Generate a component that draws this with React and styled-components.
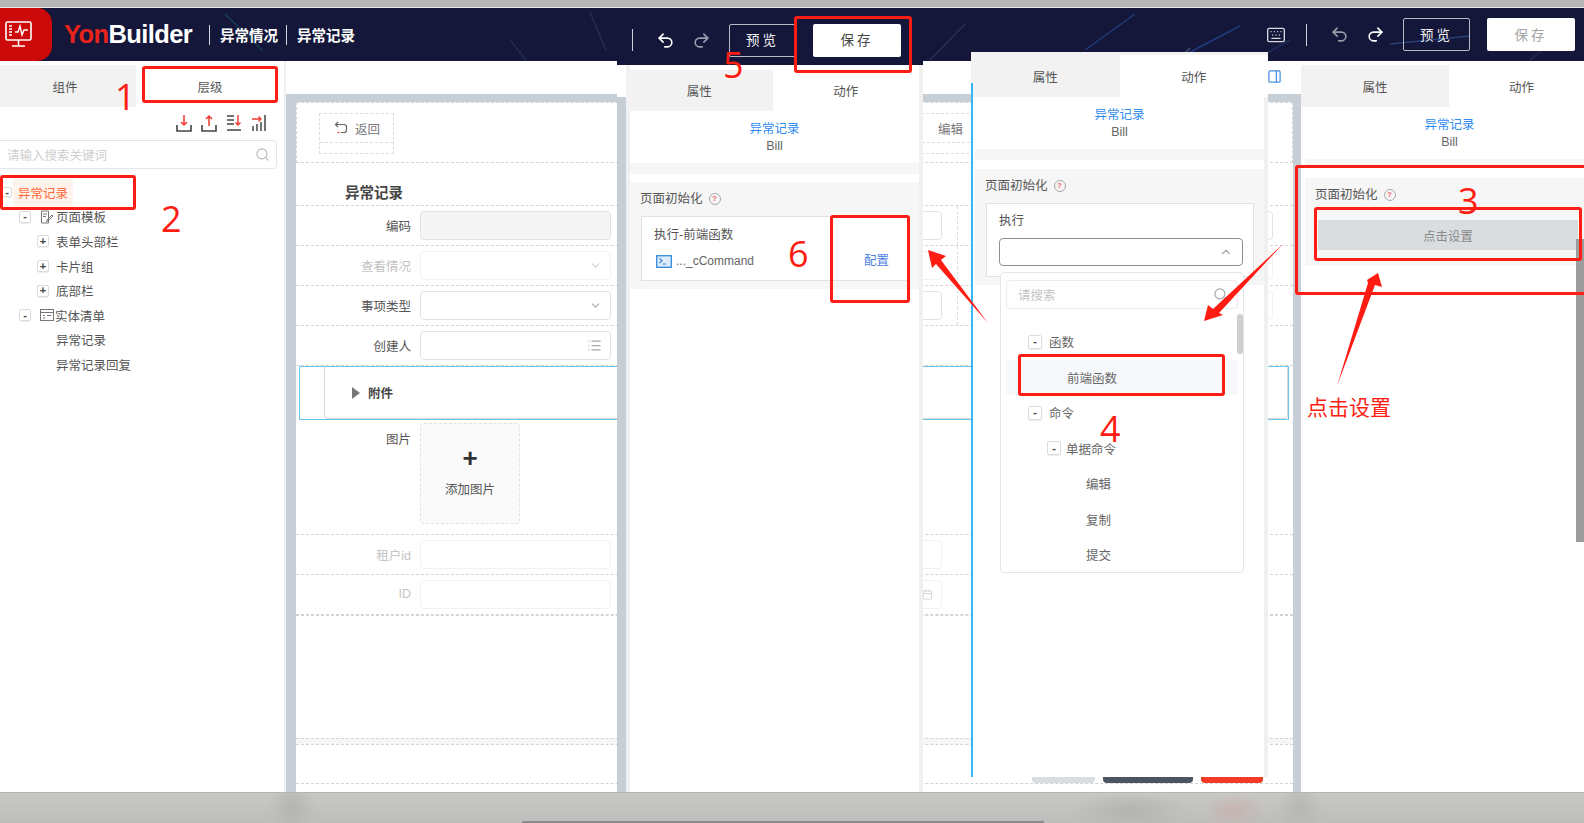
import React from "react";
import styled, { createGlobalStyle } from "styled-components";
import { Undo2, Redo2, Keyboard, ChevronDown, ChevronUp, Search, List, Calendar, PanelRight } from "lucide-react";

const GlobalStyle = createGlobalStyle`
  html, body { margin: 0; padding: 0; background: #fff; }
  * { box-sizing: border-box; }
  body { font-family: "Liberation Sans", "Noto Sans CJK SC", sans-serif; font-size: 12.5px; color: #555; }
`;

const NAVY = "#14173a";
const RED = "#ff1c12";
const STAGE = "#c8ced6";

const Page = styled.div`
  position: relative;
  width: 1584px;
  height: 823px;
  overflow: hidden;
  display: flex;
  flex-direction: column;
`;

const TopStrip = styled.div`
  height: 8px;
  background: #b4b6b4;
  border-bottom: 1px solid #e8e8e8;
`;

const Header = styled.header`
  position: relative;
  height: 53px;
  background: ${NAVY};
  display: flex;
  align-items: center;
  padding-right: 9px;
  overflow: hidden;
`;

const Streaks = styled.svg`
  position: absolute;
  inset: 0;
  width: 100%;
  height: 100%;
  filter: blur(0.7px);
`;

const LogoTile = styled.div`
  position: relative;
  width: 52px;
  height: 53px;
  background: #cc0a0a;
  border-radius: 0 15px 15px 0;
  display: flex;
  align-items: center;
  padding-left: 5px;
`;

const Brand = styled.div`
  position: relative;
  margin-left: 12px;
  width: 145px;
  font-size: 25.5px;
  font-weight: 700;
  letter-spacing: -0.6px;
  color: #fff;
  span { color: #e8231c; }
`;

const Crumb = styled.div`
  position: relative;
  height: 20px;
  display: flex;
  align-items: center;
  padding-left: 10px;
  width: ${p => p.$w}px;
  border-left: 1px solid #d8d8d8;
  color: #fff;
  font-size: 14.5px;
  font-weight: 700;
`;

const Spacer = styled.div`
  flex: 1;
`;

const Tools = styled.div`
  position: relative;
  display: flex;
  align-items: center;
  height: 34px;
`;

const ToolSep = styled.div`
  width: 1px;
  height: 22px;
  background: #cfd0d6;
  margin-right: 22px;
`;

const IconSlot = styled.div`
  width: 20px;
  margin-right: 16px;
  display: flex;
  justify-content: center;
  color: ${p => (p.$on ? "#fff" : "#9a9cab")};
`;

const PreviewBtn = styled.div`
  width: 67px;
  height: 33px;
  margin: 0 17px 0 2px;
  padding-bottom: 2px;
  border: 1px solid #b9bac4;
  border-radius: 2px;
  color: #f1f1f1;
  font-size: 13.5px;
  letter-spacing: 3px;
  display: flex;
  align-items: center;
  justify-content: center;
`;

const SaveBtn = styled.div`
  width: 88px;
  height: 33px;
  padding-bottom: 2px;
  background: #fff;
  border-radius: 2px;
  color: ${p => (p.$muted ? "#a2a2a2" : "#444")};
  font-size: 13.5px;
  letter-spacing: 3px;
  display: flex;
  align-items: center;
  justify-content: center;
`;

const KeyboardSlot = styled.div`
  position: relative;
  color: #d8d8e0;
  display: flex;
  margin-right: 20px;
`;

const Main = styled.main`
  flex: 1;
  min-height: 0;
  display: flex;
`;

const LeftPanel = styled.aside`
  width: 284px;
  background: #fff;
  padding-top: 4px;
`;

const Tabs = styled.div`
  display: flex;
  height: ${p => p.$h || 42}px;
  background: #f2f2f2;
  padding-top: ${p => p.$inset || 0}px;
`;

const Tab = styled.div`
  flex: ${p => (p.$w ? `0 0 ${p.$w}px` : 1)};
  display: flex;
  align-items: center;
  justify-content: center;
  padding: 0 ${p => p.$endPad || 0}px 0 ${p => p.$startPad || 0}px;
  background: ${p => (p.$active ? "#fff" : "#f2f2f2")};
  color: #555;
`;

const TreeTools = styled.div`
  height: 33px;
  padding: 7px 17px 0 0;
  display: flex;
  justify-content: flex-end;
  gap: 9px;
`;

const SearchBox = styled.div`
  height: 29px;
  width: 277px;
  border: 1px solid #e6e6e6;
  border-left: 0;
  border-radius: 0 4px 4px 0;
  padding: 0 6px 0 7px;
  display: flex;
  align-items: center;
  justify-content: space-between;
  color: #cfcfcf;
`;

const Tree = styled.div`
  padding-top: 11px;
`;

const TreeRow = styled.div`
  height: 24.6px;
  display: flex;
  align-items: center;
  padding-left: ${p => p.$indent}px;
  color: #555;
`;

const Toggle = styled.span`
  width: ${p => p.$size || 12}px;
  height: ${p => p.$size || 12}px;
  margin-right: ${p => p.$gap || 0}px;
  flex: none;
  border: 1px solid #dcdcdc;
  border-radius: 2px;
  box-shadow: 0 1px 1px rgba(0, 0, 0, 0.08);
  display: inline-flex;
  align-items: center;
  justify-content: center;
  color: #444;
  font-size: 11px;
  font-weight: 700;
  line-height: 1;
`;

const RootLabel = styled.span`
  margin-left: 1px;
  padding: 4px 5px;
  background: #fff3ec;
  border-radius: 2px;
  color: #ff6a3c;
`;

const Canvas = styled.section`
  flex: 1;
  min-width: 0;
  display: flex;
  flex-direction: column;
  padding-left: 2px;
  background: linear-gradient(to right, #f0f0f0 2px, #fff 2px);
`;

const CanvasTop = styled.div`
  height: 33px;
  flex: none;
  padding: 8px 19px 0 0;
  display: flex;
  justify-content: flex-end;
  color: #4a90e2;
`;

const Stage = styled.div`
  flex: 1;
  min-height: 0;
  background: ${STAGE};
  padding: 8px 8px 0 10px;
`;

const Sheet = styled.div`
  height: 100%;
  background: #fff;
  display: flex;
  flex-direction: column;
`;

const ActionsRow = styled.div`
  height: 61px;
  flex: none;
  padding: 10px 0 0 22px;
  display: flex;
  border: 1px dashed #d4d4d4;
`;

const ActionBox = styled.div`
  width: ${p => p.$w}px;
  margin-left: ${p => p.$gap || 0}px;
  height: 41px;
  border: 1px dashed #dcdcdc;
`;

const ActionBtn = styled.div`
  height: 29px;
  padding-left: ${p => p.$pad}px;
  display: flex;
  align-items: center;
  gap: 7px;
  border-bottom: 1px dashed #dcdcdc;
  color: #777;
`;

const FormTitle = styled.div`
  height: 43px;
  flex: none;
  padding: 21px 0 0 49px;
  font-size: 14.5px;
  font-weight: 700;
  line-height: 18px;
  color: #444;
  border-bottom: 1px dashed #d4d4d4;
`;

const FormRow = styled.div`
  height: 40px;
  flex: none;
  display: flex;
  border-bottom: 1px dashed #d4d4d4;
`;

const Col = styled.div`
  width: 331px;
  display: flex;
  align-items: center;
  padding-bottom: 1px;
  border-right: ${p => (p.$divided ? "1px dashed #dcdcdc" : "0")};
`;

const Label = styled.label`
  width: 115px;
  text-align: right;
  margin-right: 9px;
  color: ${p => (p.$faint ? "#c4c4c4" : "#555")};
`;

const Input = styled.div`
  width: 191px;
  height: 29px;
  border: 1px solid ${p => (p.$faint ? "#f1f1f1" : "#e2e2e2")};
  border-radius: 4px;
  background: ${p => (p.$filled ? "#f5f5f5" : "#fff")};
  display: flex;
  align-items: center;
  justify-content: flex-end;
  padding-right: 8px;
  color: ${p => (p.$faint ? "#d4d4d4" : "#a8a8a8")};
`;

const AttachSection = styled.div`
  height: 54px;
  flex: none;
  margin: 0 4px 0 3px;
  border: 1px solid #6cc5ee;
  padding-left: 24px;
`;

const AttachInner = styled.div`
  height: 100%;
  border-left: 1px solid #d8d8d8;
  border-right: 1px solid #d8d8d8;
  border-bottom: 1px solid #d8d8d8;
  border-radius: 0 0 4px 4px;
  padding-left: 27px;
  display: flex;
  align-items: center;
  gap: 8px;
  font-weight: 700;
  color: #444;
`;

const Caret = styled.span`
  width: 0;
  height: 0;
  border-left: 8px solid #777;
  border-top: 6px solid transparent;
  border-bottom: 6px solid transparent;
`;

const ImageRow = styled.div`
  height: 115px;
  flex: none;
  display: flex;
  padding-top: 3px;
  border-bottom: 1px dashed #d4d4d4;
`;

const ImageLabel = styled(Label)`
  padding-top: 9px;
  line-height: 16px;
`;

const Upload = styled.div`
  width: 100px;
  height: 101px;
  background: #fafafa;
  border: 1px dashed #e2e2e2;
  border-radius: 4px;
  display: flex;
  flex-direction: column;
  align-items: center;
  padding-top: 22px;
`;

const UploadPlus = styled.div`
  font-size: 26px;
  line-height: 24px;
  font-weight: 700;
  color: #333;
  margin-bottom: 9px;
`;

const Blank = styled.div`
  height: ${p => p.$h}px;
  flex: none;
  background: ${p => p.$bg || "#fff"};
  border-top: 1px dashed ${p => (p.$line ? "#d4d4d4" : "transparent")};
`;

const FooterRow = styled.div`
  height: 40px;
  flex: none;
  display: flex;
  align-items: flex-end;
  justify-content: flex-end;
  gap: 8px;
  padding-right: 30px;
  border-top: 1px dashed #d4d4d4;
  border-bottom: 1px dashed #d4d4d4;
`;

const FooterBtn = styled.div`
  width: ${p => p.$w}px;
  height: 30px;
  border-radius: 4px;
  background: ${p => p.$bg};
`;

const ConfigPanel = styled.div`
  background: #fff;
  display: flex;
  flex-direction: column;
`;

const RightPanel = styled(ConfigPanel)`
  width: 283px;
  padding-top: 4px;
`;

const PanelBody = styled.div`
  flex: 1;
  display: flex;
  flex-direction: column;
  margin-left: 4px;
`;

const Info = styled.div`
  height: 52px;
  flex: none;
  padding: 10px 0 0 ${p => p.$shift || 0}px;
  text-align: center;
  line-height: 17px;
  color: #666;
  span { display: block; color: #2f8cf0; }
`;

const Gap = styled.div`
  height: ${p => p.$h}px;
  flex: none;
  background: ${p => p.$bg};
`;

const SectionBox = styled.div`
  flex: none;
  background: #f6f6f6;
  padding: 8px ${p => p.$right ?? 9}px 8px 10px;
`;

const SectionTitle = styled.div`
  height: 18px;
  margin-bottom: 8px;
  line-height: 18px;
  display: flex;
  align-items: center;
  gap: 6px;
  color: #555;
`;

const Help = styled.span`
  width: 12px;
  height: 12px;
  border: 1px solid #aaa;
  border-radius: 50%;
  color: #e66;
  font-size: 8px;
  font-weight: 700;
  display: inline-flex;
  align-items: center;
  justify-content: center;
`;

const Card = styled.div`
  position: relative;
  background: #fff;
  border: 1px solid #e2e2e2;
  height: ${p => p.$h}px;
  margin-left: 1px;
  padding: ${p => p.$top || 8}px 12px 0;
`;

const CardLine = styled.div`
  line-height: 18px;
  height: 18px;
  margin-bottom: 8px;
  display: flex;
  align-items: center;
  color: #555;
  justify-content: ${p => (p.$split ? "space-between" : "flex-start")};
`;

const CommandName = styled.div`
  display: flex;
  align-items: center;
  gap: 4px;
  padding-left: 2px;
  font-size: 12px;
  color: #666;
`;

const ConfigLink = styled.span`
  color: #4a7fe0;
  margin-right: 8px;
`;

const SelectBox = styled.div`
  height: 28px;
  border: 1px solid #8a8f99;
  border-radius: 4px;
  margin-right: -2px;
  display: flex;
  align-items: center;
  justify-content: flex-end;
  padding-right: 9px;
  color: #aaa;
`;

const SetupBtn = styled.div`
  height: 30px;
  margin: 16px 6px 8px 3px;
  background: #d9dde0;
  color: #8a8a8a;
  display: flex;
  align-items: center;
  justify-content: center;
`;

const Snapshot = styled(ConfigPanel)`
  position: absolute;
  left: ${p => p.$x}px;
  top: ${p => p.$y}px;
  width: ${p => p.$w}px;
  height: ${p => p.$h}px;
`;

const DarkBar = styled.div`
  height: 57px;
  flex: none;
  background: ${NAVY};
  padding: 15px 0 0 15px;
`;

const SnapshotRow = styled.div`
  flex: 1;
  min-height: 0;
  display: flex;
`;

const StageEdge = styled.div`
  width: 9px;
  flex: none;
  margin-top: 32px;
  background: ${STAGE};
`;

const SnapshotInner = styled.div`
  flex: 1;
  min-width: 0;
  display: flex;
  flex-direction: column;
  padding-top: ${p => p.$top || 0}px;
  background: linear-gradient(to right, #f0f0f0 4px, #fff 4px);
  border-right: 4px solid #f0f0f0;
`;

const BlueEdge = styled.div`
  position: absolute;
  left: 0;
  top: 31px;
  bottom: 0;
  width: 1.5px;
  background: #35b6f2;
`;

const FloatBody = styled.div`
  position: relative;
  flex: 1;
  display: flex;
  flex-direction: column;
  margin-left: 4px;
  border-right: 4px solid #f0f0f0;
`;

const Dropdown = styled.div`
  position: absolute;
  left: 25px;
  top: 175px;
  width: 244px;
  height: 301px;
  background: #fff;
  border: 1px solid #e6e6e6;
  border-radius: 4px;
  padding: 7px 5px 0;
`;

const DropSearch = styled.div`
  height: 29px;
  border: 1px solid #ececec;
  border-radius: 4px;
  padding: 0 9px 0 11px;
  display: flex;
  align-items: center;
  justify-content: space-between;
  color: #c4c4c4;
  margin-bottom: 15px;
`;

const DropRow = styled.div`
  height: 35.5px;
  display: flex;
  align-items: center;
  padding-left: ${p => p.$indent}px;
  background: ${p => (p.$hover ? "#f7f8fc" : "transparent")};
  color: #666;
`;

const DropScroll = styled.div`
  position: absolute;
  right: 0;
  top: 41px;
  width: 6px;
  height: 40px;
  border-radius: 3px;
  background: #cfcfcf;
`;

const PageScroll = styled.div`
  position: absolute;
  right: 0;
  top: 239px;
  width: 8px;
  height: 303px;
  background: #9c9c9c;
`;

const BottomBand = styled.div`
  position: relative;
  height: 31px;
  flex: none;
  border-top: 1px solid #b4b5b2;
  background:
    radial-gradient(ellipse 24px 30px at 292px 50%, #b4b5b3, transparent),
    radial-gradient(ellipse 60px 20px at 1130px 60%, #b3b4b2, transparent),
    radial-gradient(ellipse 32px 18px at 1235px 60%, #c7b3b0, transparent),
    radial-gradient(ellipse 24px 30px at 1300px 50%, #b6b7b5, transparent),
    linear-gradient(#c8c9c6, #bdbebc);
`;

const BandScroll = styled.div`
  position: absolute;
  left: 522px;
  bottom: 0;
  width: 522px;
  height: 2px;
  background: #8c8c8c;
`;

const RedBox = styled.div`
  position: absolute;
  left: ${p => p.$x}px;
  top: ${p => p.$y}px;
  width: ${p => p.$w}px;
  height: ${p => p.$h}px;
  border: 3px solid ${RED};
  border-radius: 3px;
`;

const Mark = styled.div`
  position: absolute;
  left: ${p => p.$x}px;
  top: ${p => p.$y}px;
  color: ${RED};
  font-family: "Open Sans", "Noto Sans CJK SC", sans-serif;
  font-size: ${p => p.$size || 36}px;
  line-height: 1;
`;

const ArrowLayer = styled.svg`
  position: absolute;
  inset: 0;
  pointer-events: none;
`;

const streaks = [
  [225, 14, 262, 50, "#1c8a78", 0.35], [590, 12, 606, 50, "#3f4a6e", 0.45], [700, 44, 800, 34, "#5a6a94", 0.4],
  [930, 60, 965, 24, "#4a5a86", 0.35], [1085, 50, 1135, 14, "#2a5aa8", 0.55], [1175, 60, 1240, 26, "#2a6ad0", 0.45],
  [1180, 58, 1190, 48, "#6a7a96", 0.6], [1390, 44, 1470, 36, "#3a6ab0", 0.5], [1530, 60, 1575, 24, "#4a5a86", 0.3],
  [510, 40, 526, 60, "#2a3a6a", 0.6], [1255, 60, 1290, 40, "#2a4a90", 0.4],
];

const Logo = () => (
  <svg width="27" height="27" viewBox="0 0 27 27" fill="none" stroke="#fff" strokeWidth="1.6">
    <rect x="1" y="1" width="25" height="18" rx="1.5" />
    <path d="M10 11h3l2-6 2 9 2-5h4" strokeWidth="1.4" />
    <path d="M4 5h3M4 8h3M4 11h3M4 14h3" strokeWidth="1.4" />
    <path d="M13.5 19v5M7 25h13" />
  </svg>
);

const TrayIcon = ({ up }) => (
  <svg width="16" height="18" viewBox="0 0 16 18" fill="none">
    <path d="M1 11v6h14v-6" stroke="#444" strokeWidth="1.6" />
    <path d={up ? "M8 12V2M5 5l3-3 3 3" : "M8 1v10M5 8l3 3 3-3"} stroke="#f03a30" strokeWidth="1.5" />
  </svg>
);

const SortIcon = () => (
  <svg width="16" height="18" viewBox="0 0 16 18" fill="none">
    <path d="M1 2h7M1 6h7M1 10h7M1 16h14" stroke="#444" strokeWidth="1.5" />
    <path d="M12 1v10M9.500 8.500l2.500 2.500 2.500-2.500" stroke="#f03a30" strokeWidth="1.4" />
  </svg>
);

const BarsIcon = () => (
  <svg width="16" height="18" viewBox="0 0 16 18" fill="none">
    <path d="M2 17v-5M6 17v-7M10 17v-9M14 17V1" stroke="#444" strokeWidth="1.5" />
    <path d="M1 5h9M7.500 2.500L10 5 7.500 7.500" stroke="#f03a30" strokeWidth="1.3" />
  </svg>
);

const DocIcon = () => (
  <svg width="14" height="14" viewBox="0 0 14 14" fill="none" stroke="#777" style={{ marginRight: 2 }}>
    <path d="M1.500 1h7v12h-7zM3 4h4M3 6.500h3" />
    <path d="M7 10l5-5 1 1-5 5-1.500.5z" />
  </svg>
);

const ListDocIcon = () => (
  <svg width="15" height="13" viewBox="0 0 15 13" fill="none" stroke="#777">
    <rect x="0.500" y="0.500" width="13" height="11" />
    <path d="M0.500 3.500h13M3 6.500h2M3 9h2M7 6.500h4" />
  </svg>
);

const BackIcon = () => (
  <svg width="14" height="14" viewBox="0 0 14 14" fill="none" strokeWidth="1.2">
    <path d="M4 1L1.500 3.500 4 6M2 3.500h8a2.500 2.500 0 0 1 2.500 2.500v3A2.500 2.500 0 0 1 10 11.500H7" stroke="#666" />
    <path d="M3.500 11.500h2" stroke="#f03a30" />
  </svg>
);

const CommandIcon = () => (
  <svg width="16" height="13" viewBox="0 0 16 13" fill="none">
    <rect x="0.700" y="0.700" width="14.600" height="11.600" fill="#dcecfb" stroke="#3f8fe0" strokeWidth="1.400" />
    <path d="M3.500 3.500L6 5.800 3.500 8M7 9h3" stroke="#2f7fd0" strokeWidth="1.100" />
  </svg>
);

const HeaderTools = ({ undoOn, redoOn, savedMuted }) => (
  <Tools>
    <ToolSep />
    <IconSlot $on={undoOn}><Undo2 size={19} strokeWidth={2} /></IconSlot>
    <IconSlot $on={redoOn}><Redo2 size={19} strokeWidth={2} /></IconSlot>
    <PreviewBtn>预览</PreviewBtn>
    <SaveBtn $muted={savedMuted}>保存</SaveBtn>
  </Tools>
);

const InfoBlock = ({ shift }) => (
  <Info $shift={shift}>
    <span>异常记录</span>
    Bill
  </Info>
);

const Title = () => (
  <SectionTitle>
    页面初始化
    <Help>?</Help>
  </SectionTitle>
);

const PanelTabs = ({ h, inset, first, firstEndPad, secondStartPad, labels = ["属性", "动作"] }) => (
  <Tabs $h={h} $inset={inset}>
    <Tab $w={first} $endPad={firstEndPad}>{labels[0]}</Tab>
    <Tab $active $startPad={secondStartPad}>{labels[1]}</Tab>
  </Tabs>
);

const FormField = ({ label, faint, filled, icon, divided, hideLabel }) => (
  <Col $divided={divided}>
    <Label $faint={faint}>{hideLabel ? "" : label}</Label>
    <Input $faint={faint} $filled={filled}>{icon}</Input>
  </Col>
);

const App = () => (
  <Page>
    <GlobalStyle />
    <TopStrip />
    <Header>
      <Streaks viewBox="0 0 1584 53" preserveAspectRatio="none">
        {streaks.map(([x1, y1, x2, y2, c, o], i) => (
          <line key={i} x1={x1} y1={y1 - 8} x2={x2} y2={y2 - 8} stroke={c} strokeOpacity={o} strokeWidth="1.5" />
        ))}
      </Streaks>
      <LogoTile><Logo /></LogoTile>
      <Brand><span>Yon</span>Builder</Brand>
      <Crumb $w={77}>异常情况</Crumb>
      <Crumb $w={77}>异常记录</Crumb>
      <Spacer />
      <KeyboardSlot><Keyboard size={20} strokeWidth={1.6} /></KeyboardSlot>
      <HeaderTools redoOn savedMuted />
    </Header>
    <Main>
      <LeftPanel>
        <PanelTabs first={136} firstEndPad={6} labels={["组件", "层级"]} />
        <TreeTools>
          <TrayIcon />
          <TrayIcon up />
          <SortIcon />
          <BarsIcon />
        </TreeTools>
        <SearchBox>
          请输入搜索关键词
          <Search size={15} color="#bbb" />
        </SearchBox>
        <Tree>
          <TreeRow $indent={2}><Toggle $size={10}>-</Toggle><RootLabel>异常记录</RootLabel></TreeRow>
          <TreeRow $indent={19}><Toggle $gap={9}>-</Toggle><DocIcon />页面模板</TreeRow>
          <TreeRow $indent={37}><Toggle $gap={7}>+</Toggle>表单头部栏</TreeRow>
          <TreeRow $indent={37}><Toggle $gap={7}>+</Toggle>卡片组</TreeRow>
          <TreeRow $indent={37}><Toggle $gap={7}>+</Toggle>底部栏</TreeRow>
          <TreeRow $indent={19}><Toggle $gap={9}>-</Toggle><ListDocIcon />实体清单</TreeRow>
          <TreeRow $indent={56}>异常记录</TreeRow>
          <TreeRow $indent={56}>异常记录回复</TreeRow>
        </Tree>
      </LeftPanel>
      <Canvas>
        <CanvasTop><PanelRight size={15} /></CanvasTop>
        <Stage>
          <Sheet>
            <ActionsRow>
              <ActionBox $w={75}>
                <ActionBtn $pad={14}><BackIcon />返回</ActionBtn>
              </ActionBox>
              <ActionBox $w={320} $gap={527}>
                <ActionBtn $pad={16}>编辑</ActionBtn>
              </ActionBox>
            </ActionsRow>
            <FormTitle>异常记录</FormTitle>
            <FormRow>
              <FormField label="编码" filled />
              <FormField hideLabel divided />
              <FormField hideLabel />
            </FormRow>
            <FormRow>
              <FormField label="查看情况" faint icon={<ChevronDown size={13} />} />
              <FormField hideLabel faint divided />
              <FormField hideLabel faint />
            </FormRow>
            <FormRow>
              <FormField label="事项类型" icon={<ChevronDown size={13} />} />
              <FormField hideLabel divided />
              <FormField hideLabel faint />
            </FormRow>
            <FormRow>
              <FormField label="创建人" icon={<List size={15} />} />
            </FormRow>
            <AttachSection>
              <AttachInner><Caret />附件</AttachInner>
            </AttachSection>
            <ImageRow>
              <ImageLabel>图片</ImageLabel>
              <Upload>
                <UploadPlus>+</UploadPlus>
                添加图片
              </Upload>
            </ImageRow>
            <FormRow>
              <FormField label="租户id" faint />
              <FormField hideLabel faint />
            </FormRow>
            <FormRow>
              <FormField label="ID" faint />
              <FormField hideLabel faint icon={<Calendar size={11} />} />
            </FormRow>
            <Blank $h={123} $line />
            <Blank $h={6} $bg="#f6f6f6" $line />
            <FooterRow>
              <FooterBtn $w={63} $bg="#dadde0" />
              <FooterBtn $w={90} $bg="#4c5464" />
              <FooterBtn $w={62} $bg="#f33a26" />
            </FooterRow>
          </Sheet>
        </Stage>
      </Canvas>
      <RightPanel>
        <PanelTabs first={148} secondStartPad={10} />
        <PanelBody>
          <InfoBlock shift={10} />
          <Gap $h={9} $bg="#f6f6f6" />
          <Gap $h={10} $bg="#fff" />
          <SectionBox $right={0}>
            <Title />
            <SetupBtn>点击设置</SetupBtn>
          </SectionBox>
        </PanelBody>
      </RightPanel>
    </Main>
    <BottomBand><BandScroll /></BottomBand>

    <Snapshot $x={617} $y={8} $w={306} $h={784}>
      <DarkBar><HeaderTools undoOn /></DarkBar>
      <SnapshotRow>
        <StageEdge />
        <SnapshotInner $top={5}>
          <PanelTabs h={41} />
          <PanelBody>
            <InfoBlock />
            <Gap $h={11} $bg="#f6f6f6" />
            <Gap $h={8} $bg="#fff" />
            <SectionBox>
              <Title />
              <Card $h={65} $top={9}>
                <CardLine>执行-前端函数</CardLine>
                <CardLine $split>
                  <CommandName><CommandIcon />..._cCommand</CommandName>
                  <ConfigLink>配置</ConfigLink>
                </CardLine>
              </Card>
            </SectionBox>
          </PanelBody>
        </SnapshotInner>
      </SnapshotRow>
    </Snapshot>

    <Snapshot $x={971} $y={52} $w={297} $h={725}>
      <BlueEdge />
      <PanelTabs h={45} inset={3} />
      <FloatBody>
        <InfoBlock />
        <Gap $h={11} $bg="#f6f6f6" />
        <Gap $h={9} $bg="#fff" />
        <SectionBox $right={10}>
          <Title />
          <Card $h={74}>
            <CardLine>执行</CardLine>
            <SelectBox><ChevronUp size={14} /></SelectBox>
          </Card>
        </SectionBox>
        <Dropdown>
          <DropSearch>请搜索<Search size={15} color="#aaa" /></DropSearch>
          <DropRow $indent={22}><Toggle $size={14} $gap={7}>-</Toggle>函数</DropRow>
          <DropRow $indent={61} $hover>前端函数</DropRow>
          <DropRow $indent={22}><Toggle $size={14} $gap={7}>-</Toggle>命令</DropRow>
          <DropRow $indent={41}><Toggle $size={14} $gap={5}>-</Toggle>单据命令</DropRow>
          <DropRow $indent={80}>编辑</DropRow>
          <DropRow $indent={80}>复制</DropRow>
          <DropRow $indent={80}>提交</DropRow>
          <DropScroll />
        </Dropdown>
      </FloatBody>
    </Snapshot>

    <PageScroll />

    <RedBox $x={142} $y={66} $w={136} $h={37} />
    <RedBox $x={0} $y={175} $w={136} $h={35} />
    <RedBox $x={794} $y={16} $w={118} $h={57} />
    <RedBox $x={830} $y={215} $w={80} $h={88} />
    <RedBox $x={1018} $y={354} $w={207} $h={42} />
    <RedBox $x={1295} $y={165} $w={300} $h={130} />
    <RedBox $x={1314} $y={207} $w={268} $h={54} />

    <Mark $x={115} $y={79}>1</Mark>
    <Mark $x={161} $y={201}>2</Mark>
    <Mark $x={1458} $y={183}>3</Mark>
    <Mark $x={1100} $y={411}>4</Mark>
    <Mark $x={723} $y={47}>5</Mark>
    <Mark $x={788} $y={236}>6</Mark>
    <Mark $x={1307} $y={397} $size={21}>点击设置</Mark>

    <ArrowLayer width="1584" height="823" viewBox="0 0 1584 823">
      <polygon points="928,250 946,256 941,260 988,323 936,264 932,268" fill={RED} />
      <polygon points="1204,321 1208,305 1213,309 1283,244 1219,313 1223,315" fill={RED} />
      <polygon points="1378,273 1382,287 1375,285 1337,386 1368,283 1367,280" fill={RED} />
    </ArrowLayer>
  </Page>
);

export default App;
